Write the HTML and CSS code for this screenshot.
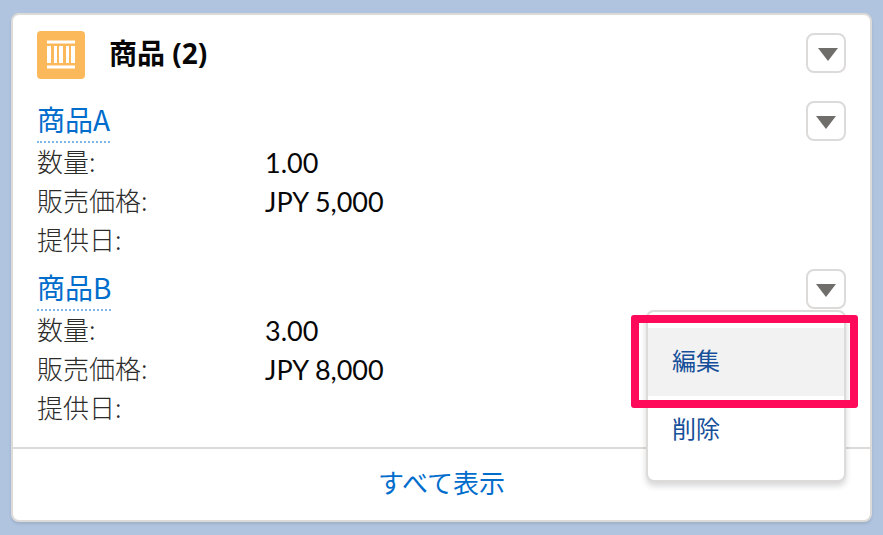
FILE: index.html
```html
<!DOCTYPE html>
<html lang="ja">
<head>
    <meta charset="UTF-8">
    <meta name="viewport" content="width=device-width, initial-scale=1.0">
    <title>商品</title>
    <link rel="stylesheet" href="styles.css">
</head>
<body>
    <article class="card">
        <header class="card-header">
            <svg class="card-icon" viewBox="0 0 48 48" aria-hidden="true">
                <rect width="48" height="48" rx="4" fill="#fcb95b"/>
                <path fill="#fff" d="M10 9.500h28v3H10zM10 34.500h28v3H10zM10 15h4v17h-4zM17 15h3v17h-3zM22 15h4v17h-4zM29 15h3v17h-3zM34 15h4v17h-4z"/>
            </svg>
            <h2 class="card-title">商品 (2)</h2>
            <button class="menu-button" type="button" aria-label="商品のアクション">
                <svg viewBox="0 0 36 36" aria-hidden="true"><path d="M10 13h20L20 26z"/></svg>
            </button>
        </header>

        <ul class="item-list">
            <li class="item">
                <div class="item-header">
                    <a class="item-link" href="#">商品A</a>
                    <div class="item-actions">
                        <button class="menu-button" type="button" aria-label="商品Aのアクション">
                            <svg viewBox="0 0 36 36" aria-hidden="true"><path d="M8 13h20L18 26z"/></svg>
                        </button>
                    </div>
                </div>
                <dl class="details">
                    <dt>数量:</dt>
                    <dd>1.00</dd>
                    <dt>販売価格:</dt>
                    <dd>JPY 5,000</dd>
                    <dt>提供日:</dt>
                    <dd></dd>
                </dl>
            </li>
            <li class="item">
                <div class="item-header">
                    <a class="item-link" href="#">商品B</a>
                    <div class="item-actions">
                        <button class="menu-button" type="button" aria-label="商品Bのアクション" aria-expanded="true">
                            <svg viewBox="0 0 36 36" aria-hidden="true"><path d="M8 13h20L18 26z"/></svg>
                        </button>
                        <div class="menu">
                            <button class="menu-item active" type="button">編集</button>
                            <button class="menu-item" type="button">削除</button>
                        </div>
                    </div>
                </div>
                <dl class="details">
                    <dt>数量:</dt>
                    <dd>3.00</dd>
                    <dt>販売価格:</dt>
                    <dd>JPY 8,000</dd>
                    <dt>提供日:</dt>
                    <dd></dd>
                </dl>
            </li>
        </ul>

        <footer class="card-footer">
            <a href="#">すべて表示</a>
        </footer>
    </article>
</body>
</html>
```
FILE: styles.css
```css
:root {
    --page-color: #b0c4df;
    --border-color: #dddbda;
    --link-color: #006dcc;
    --menu-color: #16509a;
    --label-color: #2b2b2a;
    --marker-color: #ff0a5b;
}

* {
    margin: 0;
    padding: 0;
    box-sizing: border-box;
}

body {
    font-family: "Noto Sans", "Noto Sans CJK JP", sans-serif;
    font-size: 26px;
    line-height: 36px;
    color: #080707;
    background-color: var(--page-color);
    padding: 13px 11px;
}

a {
    color: var(--link-color);
    text-decoration: none;
}

.card {
    background: white;
    border: 2px solid var(--border-color);
    border-radius: 8px;
    box-shadow: 0 2px 3px rgba(0, 0, 0, 0.1);
}

.card-header {
    display: flex;
    align-items: center;
    padding: 16px 24px 22px;
}

.card-icon {
    width: 48px;
    height: 48px;
    margin-right: 24px;
}

.card-title {
    flex: 1;
    padding-bottom: 4px;
    font-size: 28px;
    font-weight: 700;
}

.menu-button {
    display: block;
    width: 40px;
    height: 40px;
    background: white;
    border: 2px solid var(--border-color);
    border-radius: 8px;
    cursor: pointer;
}

.card-header .menu-button {
    margin-bottom: 4px;
}

.menu-button svg {
    display: block;
    fill: #706e6b;
}

.item-list {
    display: grid;
    gap: 9px;
    padding: 0 24px 19px;
    list-style: none;
}

.item-header {
    display: flex;
    justify-content: space-between;
    align-items: flex-start;
    height: 42px;
}

.item-link {
    padding-bottom: 4px;
    font-family: "Noto Sans CJK JP", sans-serif;
    font-size: 28px;
    border-bottom: 2px dotted #80b6e6;
}

.details {
    display: grid;
    grid-template-columns: 228px 1fr;
    grid-auto-rows: 39px;
}

.details dt {
    font-family: "Noto Sans CJK JP", sans-serif;
    font-weight: 300;
    color: var(--label-color);
}

.details dd {
    font-family: Lato, sans-serif;
    font-size: 27px;
    line-height: 39px;
}

/* Dropdown */
.item-actions {
    position: relative;
}

.menu {
    position: absolute;
    top: 41px;
    right: 0;
    z-index: 1;
    width: 200px;
    padding: 16px 0;
    background: white;
    border: 2px solid var(--border-color);
    border-radius: 8px;
    box-shadow: 0 4px 6px rgba(0, 0, 0, 0.16);
}

.menu-item {
    display: block;
    width: 100%;
    height: 68px;
    padding: 0 24px 6px;
    font-family: "Noto Sans CJK JP", sans-serif;
    font-size: 24px;
    text-align: left;
    color: var(--menu-color);
    background: none;
    border: none;
    cursor: pointer;
}

.menu-item.active {
    position: relative;
    background: #f2f2f2;
}

/* Marker round the chosen entry */
.menu-item.active::after {
    content: "";
    position: absolute;
    inset: -13px -14px -12px -17px;
    border: 8px solid var(--marker-color);
    border-radius: 3px;
}

.card-footer {
    padding: 15px 24px 20px;
    border-top: 2px solid var(--border-color);
    text-align: center;
    font-family: "Noto Sans CJK JP", sans-serif;
}
```
